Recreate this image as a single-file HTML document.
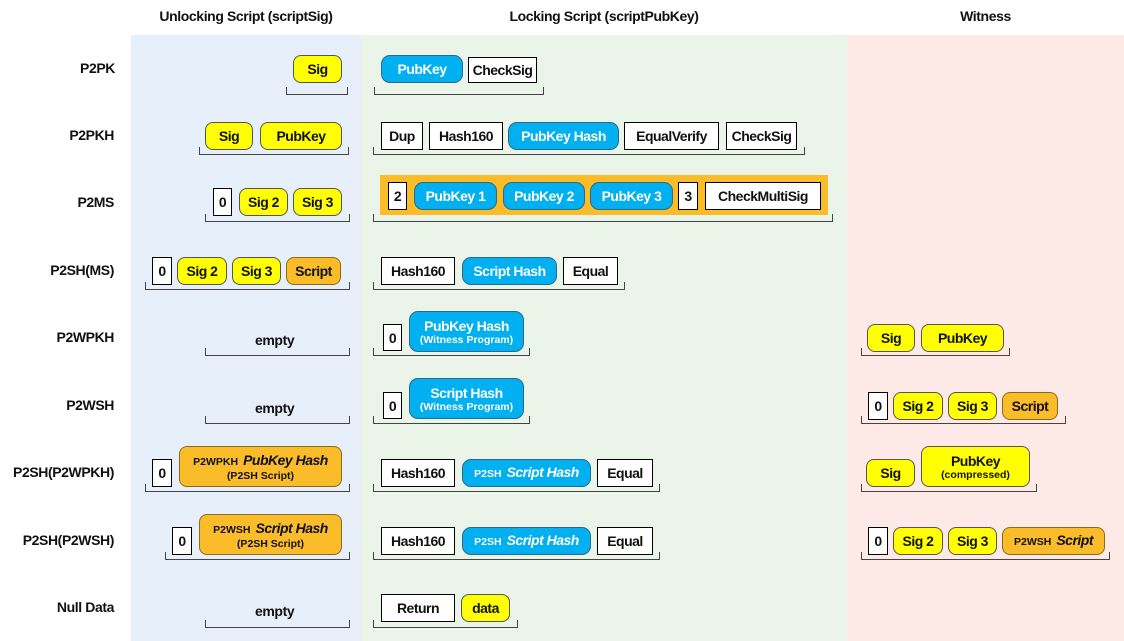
<!DOCTYPE html>
<html><head><meta charset="utf-8"><style>
*{margin:0;padding:0;box-sizing:border-box}
body{width:1124px;height:641px;position:relative;background:#fff;font-family:"Liberation Sans",sans-serif;font-weight:bold;color:#111;overflow:hidden}
.p{position:absolute;top:35px;height:606px}
.h{position:absolute;top:8px;font-size:14px;text-align:center;letter-spacing:-0.4px}
.l{position:absolute;right:1010px;font-size:14px;letter-spacing:-0.4px;white-space:nowrap}
.x{position:absolute;display:flex;flex-direction:column;align-items:center;justify-content:center;font-size:14px;letter-spacing:-0.5px;white-space:nowrap;line-height:16px}
.w{background:#fff;border:1px solid #000}
.y{background:#ffff00;border:1px solid #555;border-radius:8px}
.b{background:#00b0f0;border:1px solid #2a6a88;border-radius:9px;color:#fff}
.o{background:#fbbc2a;border:1px solid #8a6a20;border-radius:8px}
.s{font-size:10.5px;letter-spacing:0;line-height:12px}
.br{position:absolute;height:8px;border:1.4px solid #444;border-top:none}
.t{position:absolute;font-size:14px;letter-spacing:-0.4px}
i{font-style:italic}
.k{font-size:10.5px;letter-spacing:0;margin-right:5px;font-style:normal}
</style></head><body>
<div class="p" style="left:131px;width:230px;background:#e7f0fa"></div>
<div class="p" style="left:361px;width:486px;background:#eaf4e9"></div>
<div class="p" style="left:847px;width:277px;background:#fdeae7"></div>

<div class="h" style="left:131px;width:230px">Unlocking Script (scriptSig)</div>
<div class="h" style="left:361px;width:486px">Locking Script (scriptPubKey)</div>
<div class="h" style="left:847px;width:277px">Witness</div>

<div class="l" style="top:60px;right:1009px">P2PK</div>
<div class="l" style="top:127px">P2PKH</div>
<div class="l" style="top:194px">P2MS</div>
<div class="l" style="top:262px">P2SH(MS)</div>
<div class="l" style="top:329px">P2WPKH</div>
<div class="l" style="top:397px">P2WSH</div>
<div class="l" style="top:464px">P2SH(P2WPKH)</div>
<div class="l" style="top:532px">P2SH(P2WSH)</div>
<div class="l" style="top:599px">Null Data</div>

<!-- P2PK -->
<div class="x y" style="left:293px;top:55px;width:49px;height:28px">Sig</div>
<div class="br" style="left:286px;top:87px;width:62px"></div>
<div class="x b" style="left:381px;top:55px;width:82px;height:28px">PubKey</div>
<div class="x w" style="left:468px;top:57px;width:69px;height:26px">CheckSig</div>
<div class="br" style="left:374px;top:87px;width:170px"></div>

<!-- P2PKH -->
<div class="x y" style="left:205px;top:122px;width:48px;height:28px">Sig</div>
<div class="x y" style="left:260px;top:122px;width:82px;height:28px">PubKey</div>
<div class="br" style="left:199px;top:147px;width:150px"></div>
<div class="x w" style="left:381px;top:122px;width:42px;height:28px">Dup</div>
<div class="x w" style="left:429px;top:122px;width:74px;height:28px">Hash160</div>
<div class="x b" style="left:508px;top:122px;width:111px;height:28px">PubKey Hash</div>
<div class="x w" style="left:624px;top:122px;width:95px;height:28px">EqualVerify</div>
<div class="x w" style="left:726px;top:122px;width:71px;height:28px">CheckSig</div>
<div class="br" style="left:373px;top:147px;width:432px"></div>

<!-- P2MS -->
<div class="x w" style="left:213px;top:188px;width:19px;height:28px">0</div>
<div class="x y" style="left:239px;top:188px;width:49px;height:28px">Sig 2</div>
<div class="x y" style="left:293px;top:188px;width:49px;height:28px">Sig 3</div>
<div class="br" style="left:205px;top:214px;width:145px"></div>
<div style="position:absolute;left:380px;top:175px;width:448px;height:40px;background:#fbbc2a"></div>
<div class="x w" style="left:388px;top:182px;width:19px;height:28px">2</div>
<div class="x b" style="left:414px;top:182px;width:83px;height:28px">PubKey 1</div>
<div class="x b" style="left:503px;top:182px;width:82px;height:28px">PubKey 2</div>
<div class="x b" style="left:590px;top:182px;width:83px;height:28px">PubKey 3</div>
<div class="x w" style="left:678px;top:182px;width:20px;height:28px">3</div>
<div class="x w" style="left:705px;top:182px;width:116px;height:28px">CheckMultiSig</div>
<div class="br" style="left:373px;top:214px;width:460px"></div>

<!-- P2SH(MS) -->
<div class="x w" style="left:152px;top:257px;width:20px;height:28px">0</div>
<div class="x y" style="left:177px;top:257px;width:50px;height:28px">Sig 2</div>
<div class="x y" style="left:232px;top:257px;width:49px;height:28px">Sig 3</div>
<div class="x o" style="left:286px;top:257px;width:55px;height:28px">Script</div>
<div class="br" style="left:145px;top:282px;width:205px"></div>
<div class="x w" style="left:381px;top:257px;width:74px;height:28px">Hash160</div>
<div class="x b" style="left:462px;top:257px;width:95px;height:28px">Script Hash</div>
<div class="x w" style="left:563px;top:257px;width:55px;height:28px">Equal</div>
<div class="br" style="left:373px;top:282px;width:252px"></div>

<!-- P2WPKH -->
<div class="t" style="left:255px;top:332px">empty</div>
<div class="br" style="left:205px;top:348px;width:145px"></div>
<div class="x w" style="left:383px;top:324px;width:19px;height:27px">0</div>
<div class="x b" style="left:409px;top:311px;width:115px;height:41px">PubKey Hash<span class="s">(Witness Program)</span></div>
<div class="br" style="left:373px;top:348px;width:157px"></div>
<div class="x y" style="left:867px;top:324px;width:48px;height:28px">Sig</div>
<div class="x y" style="left:921px;top:324px;width:83px;height:28px">PubKey</div>
<div class="br" style="left:861px;top:348px;width:149px"></div>

<!-- P2WSH -->
<div class="t" style="left:255px;top:400px">empty</div>
<div class="br" style="left:205px;top:416px;width:145px"></div>
<div class="x w" style="left:383px;top:392px;width:19px;height:27px">0</div>
<div class="x b" style="left:409px;top:378px;width:115px;height:41px">Script Hash<span class="s">(Witness Program)</span></div>
<div class="br" style="left:373px;top:416px;width:157px"></div>
<div class="x w" style="left:868px;top:392px;width:20px;height:28px">0</div>
<div class="x y" style="left:893px;top:392px;width:50px;height:28px">Sig 2</div>
<div class="x y" style="left:948px;top:392px;width:49px;height:28px">Sig 3</div>
<div class="x o" style="left:1002px;top:392px;width:56px;height:28px">Script</div>
<div class="br" style="left:861px;top:416px;width:205px"></div>

<!-- P2SH(P2WPKH) -->
<div class="x w" style="left:152px;top:459px;width:20px;height:28px">0</div>
<div class="x o" style="left:179px;top:446px;width:163px;height:41px"><span><span class="k">P2WPKH</span><i>PubKey Hash</i></span><span class="s">(P2SH Script)</span></div>
<div class="br" style="left:145px;top:484px;width:205px"></div>
<div class="x w" style="left:381px;top:459px;width:74px;height:28px">Hash160</div>
<div class="x b" style="left:462px;top:459px;width:129px;height:28px"><span><span class="k">P2SH</span><i>Script Hash</i></span></div>
<div class="x w" style="left:597px;top:459px;width:56px;height:28px">Equal</div>
<div class="br" style="left:373px;top:484px;width:287px"></div>
<div class="x y" style="left:866px;top:459px;width:49px;height:28px">Sig</div>
<div class="x y" style="left:921px;top:446px;width:109px;height:41px">PubKey<span class="s">(compressed)</span></div>
<div class="br" style="left:861px;top:484px;width:176px"></div>

<!-- P2SH(P2WSH) -->
<div class="x w" style="left:172px;top:527px;width:20px;height:28px">0</div>
<div class="x o" style="left:199px;top:514px;width:143px;height:41px"><span><span class="k">P2WSH</span><i>Script Hash</i></span><span class="s">(P2SH Script)</span></div>
<div class="br" style="left:165px;top:552px;width:185px"></div>
<div class="x w" style="left:381px;top:527px;width:74px;height:28px">Hash160</div>
<div class="x b" style="left:462px;top:527px;width:129px;height:28px"><span><span class="k">P2SH</span><i>Script Hash</i></span></div>
<div class="x w" style="left:597px;top:527px;width:56px;height:28px">Equal</div>
<div class="br" style="left:373px;top:552px;width:287px"></div>
<div class="x w" style="left:868px;top:527px;width:20px;height:28px">0</div>
<div class="x y" style="left:893px;top:527px;width:50px;height:28px">Sig 2</div>
<div class="x y" style="left:948px;top:527px;width:49px;height:28px">Sig 3</div>
<div class="x o" style="left:1002px;top:527px;width:103px;height:28px"><span><span class="k">P2WSH</span><i>Script</i></span></div>
<div class="br" style="left:861px;top:552px;width:249px"></div>

<!-- Null Data -->
<div class="t" style="left:255px;top:603px">empty</div>
<div class="br" style="left:205px;top:620px;width:145px"></div>
<div class="x w" style="left:381px;top:594px;width:74px;height:28px">Return</div>
<div class="x y" style="left:461px;top:594px;width:49px;height:28px">data</div>
<div class="br" style="left:373px;top:620px;width:145px"></div>
</body></html>
